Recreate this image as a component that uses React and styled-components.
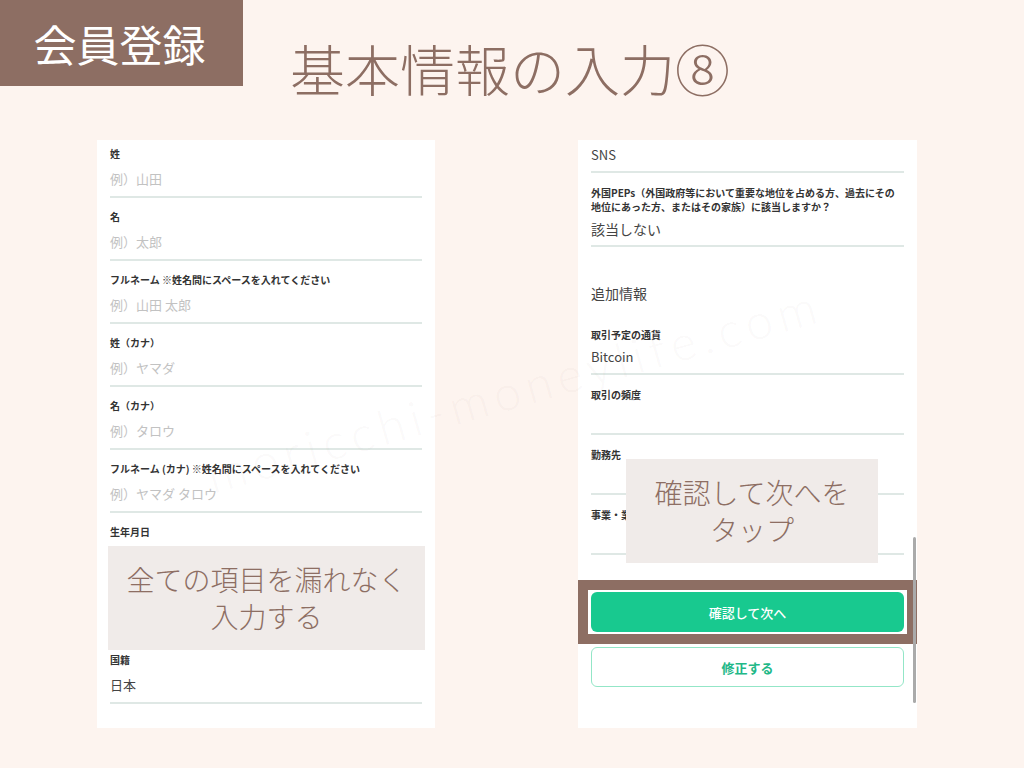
import React from "react";
import styled, { createGlobalStyle } from "styled-components";

const GlobalStyle = createGlobalStyle`
  html, body {
    margin: 0;
    padding: 0;
    width: 1024px;
    height: 768px;
    overflow: hidden;
    background: #fdf4ef;
    font-family: "Noto Sans CJK JP", "Noto Sans", sans-serif;
  }
`;

const BROWN = "#8d6e63";

const Page = styled.div`
  position: relative;
  width: 1024px;
  height: 768px;
  overflow: hidden;
`;

const Header = styled.header`
  display: flex;
  align-items: flex-start;
  height: 86px;
`;

const Tag = styled.div`
  width: 243px;
  height: 86px;
  padding-right: 4px;
  box-sizing: border-box;
  background: ${BROWN};
  color: #fff;
  font-size: 43px;
  font-weight: 400;
  line-height: 1;
  display: flex;
  align-items: center;
  justify-content: center;
`;

const Title = styled.h1`
  margin: 40px 0 0 47px;
  font-size: 55px;
  line-height: 1;
  font-weight: 300;
  color: ${BROWN};
  white-space: nowrap;
`;

const Main = styled.main`
  display: flex;
  gap: 143px;
  margin-top: 54px;
  padding-left: 97px;
`;

const Card = styled.section`
  position: relative;
  box-sizing: border-box;
  width: ${(p) => p.$width}px;
  height: 588px;
  background: #fff;
  padding: ${(p) => p.$padTop}px 13px 0 13px;
  overflow: hidden;
`;

const Field = styled.div`
  margin-top: ${(p) => p.$mt ?? 0}px;
  padding-top: ${(p) => p.$pt ?? 0}px;
  padding-bottom: ${(p) => p.$pb}px;
  border-bottom: 2px solid ${(p) => (p.$noLine ? "transparent" : "#dfe8e5")};
`;

const Label = styled.div`
  font-size: 10px;
  line-height: 14px;
  font-weight: 700;
  color: #333;
  white-space: nowrap;
`;

const Value = styled.div`
  margin-top: ${(p) => p.$gap ?? 0}px;
  height: ${(p) => p.$h ?? 20}px;
  font-size: ${(p) => p.$size ?? 13}px;
  line-height: 20px;
  color: ${(p) => (p.$placeholder ? "#c2c2c2" : "#444")};
  white-space: nowrap;
`;

const SectionHeading = styled.div`
  margin-top: 36px;
  font-size: 14px;
  line-height: 20px;
  color: #444;
`;

const Highlight = styled.div`
  margin: 25px -13px 0;
  border: 10px solid ${BROWN};
  padding: 2px 3px 2px 3px;
  background: #fff;
`;

const PrimaryButton = styled.button`
  display: block;
  width: 100%;
  height: 40px;
  border: none;
  border-radius: 6px;
  background: #18c98f;
  color: #fff;
  font-family: inherit;
  font-size: 13px;
  font-weight: 500;
`;

const SecondaryButton = styled.button`
  display: block;
  box-sizing: border-box;
  width: 100%;
  height: 40px;
  margin-top: 3px;
  border: 1.5px solid #93e6c7;
  border-radius: 6px;
  background: #fff;
  color: #22b887;
  font-family: inherit;
  font-size: 13px;
  font-weight: 700;
`;

const Note = styled.div`
  position: absolute;
  left: ${(p) => p.$left}px;
  top: ${(p) => p.$top}px;
  width: ${(p) => p.$width}px;
  height: 104px;
  background: #f0ebe9;
  color: ${BROWN};
  font-size: 28px;
  font-weight: 300;
  line-height: 37px;
  text-align: center;
  display: flex;
  align-items: center;
  justify-content: center;
`;

const Scrollbar = styled.div`
  position: absolute;
  left: 335px;
  top: 397px;
  width: 3px;
  height: 166px;
  border-radius: 2px;
  background: #aaa;
`;

const Watermark = styled.div`
  position: absolute;
  left: 212px;
  top: 452px;
  font-family: Lato, "Open Sans", sans-serif;
  font-weight: 300;
  font-size: 48px;
  line-height: 1;
  letter-spacing: 6.5px;
  color: rgba(150, 110, 95, 0.055);
  transform: rotate(-15.8deg);
  transform-origin: 0 80%;
  white-space: nowrap;
  pointer-events: none;
`;

const leftFields = [
  ["姓", "例）山田"],
  ["名", "例）太郎"],
  ["フルネーム ※姓名間にスペースを入れてください", "例）山田 太郎"],
  ["姓（カナ）", "例）ヤマダ"],
  ["名（カナ）", "例）タロウ"],
  ["フルネーム (カナ) ※姓名間にスペースを入れてください", "例）ヤマダ タロウ"],
];

export default function App() {
  return (
    <Page>
      <GlobalStyle />
      <Header>
        <Tag>会員登録</Tag>
        <Title>基本情報の入力⑧</Title>
      </Header>
      <Main>
        <Card $width={338} $padTop={7}>
          {leftFields.map(([label, ph], i) => (
            <Field key={label} $mt={i === 0 ? 0 : 12} $pb={7}>
              <Label>{label}</Label>
              <Value $gap={8} $placeholder>
                {ph}
              </Value>
            </Field>
          ))}
          <Field $mt={12} $pb={7} $noLine>
            <Label>生年月日</Label>
            <Value $gap={8} $h={85} />
          </Field>
          <Field $mt={12} $pb={7}>
            <Label>国籍</Label>
            <Value $gap={8}>日本</Value>
          </Field>
          <Note $left={11} $top={406} $width={317}>
            全ての項目を漏れなく
            <br />
            入力する
          </Note>
        </Card>

        <Card $width={339} $padTop={0}>
          <Field $pt={5} $pb={6}>
            <Value $size={13}>SNS</Value>
          </Field>
          <Field $mt={13} $pb={6}>
            <Label>
              外国PEPs（外国政府等において重要な地位を占める方、過去にその
              <br />
              地位にあった方、またはその家族）に該当しますか？
            </Label>
            <Value $gap={5} $size={14}>
              該当しない
            </Value>
          </Field>
          <SectionHeading>追加情報</SectionHeading>
          <Field $mt={25} $pb={6}>
            <Label>取引予定の通貨</Label>
            <Value $gap={5}>Bitcoin</Value>
          </Field>
          <Field $mt={13} $pb={6}>
            <Label>取引の頻度</Label>
            <Value $gap={5} />
          </Field>
          <Field $mt={13} $pb={6}>
            <Label>勤務先</Label>
            <Value $gap={5} />
          </Field>
          <Field $mt={13} $pb={6}>
            <Label>事業・業種</Label>
            <Value $gap={5} />
          </Field>
          <Highlight>
            <PrimaryButton>確認して次へ</PrimaryButton>
          </Highlight>
          <SecondaryButton>修正する</SecondaryButton>
          <Scrollbar />
          <Note $left={48} $top={319} $width={252}>
            確認して次へを
            <br />
            タップ
          </Note>
        </Card>
      </Main>
      <Watermark>moricchi-moneylife.com</Watermark>
    </Page>
  );
}
